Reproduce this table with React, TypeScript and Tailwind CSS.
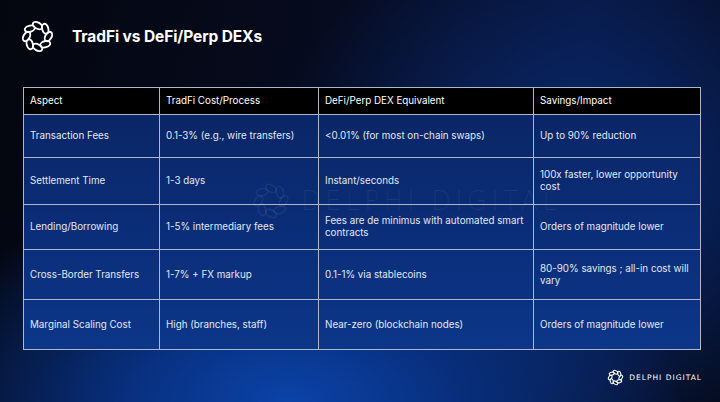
const rows = [
  {
    aspect: "Transaction Fees",
    tradfi: "0.1-3% (e.g., wire transfers)",
    defi: "<0.01% (for most on-chain swaps)",
    impact: "Up to 90% reduction",
    h: "h-[43px]",
  },
  {
    aspect: "Settlement Time",
    tradfi: "1-3 days",
    defi: "Instant/seconds",
    impact: "100x faster, lower opportunity cost",
    h: "h-[47px]",
  },
  {
    aspect: "Lending/Borrowing",
    tradfi: "1-5% intermediary fees",
    defi: "Fees are de minimus with automated smart contracts",
    impact: "Orders of magnitude lower",
    h: "h-[45px]",
  },
  {
    aspect: "Cross-Border Transfers",
    tradfi: "1-7% + FX markup",
    defi: "0.1-1% via stablecoins",
    impact: "80-90% savings ; all-in cost will vary",
    h: "h-[50px]",
  },
  {
    aspect: "Marginal Scaling Cost",
    tradfi: "High (branches, staff)",
    defi: "Near-zero (blockchain nodes)",
    impact: "Orders of magnitude lower",
    h: "h-[50px]",
  },
];

// braided ring mark used in the header, watermark and footer
function DelphiMark({ className, stroke = 1.6 }: { className?: string; stroke?: number }) {
  const loops = Array.from({ length: 8 }, (_, i) => i * 45);
  return (
    <svg viewBox="-24 -24 48 48" className={className} fill="none">
      {loops.map((deg) => (
        <ellipse
          key={deg}
          cx="0"
          cy="-15"
          rx="7"
          ry="4.2"
          transform={`rotate(${deg}) rotate(30 0 -15)`}
          stroke="currentColor"
          strokeWidth={stroke}
        />
      ))}
    </svg>
  );
}

export default function App() {
  const cell = "border border-[#aeb6c8] px-[6px] align-middle";

  return (
    <div
      className="relative w-[720px] h-[402px] overflow-hidden bg-[radial-gradient(ellipse_55%_55%_at_40%_100%,#0b43a8_0%,#08307f_40%,transparent_100%),radial-gradient(ellipse_45%_70%_at_82%_45%,#0a2a72_0%,transparent_100%),linear-gradient(100deg,#04060f_0%,#060b1f_45%,#071336_75%,#040814_100%)] font-['Inter','Liberation_Sans',sans-serif]"
    >
      {/* Title */}
      <div className="flex items-center gap-[17px] pl-[20px] pt-[19px]">
        <DelphiMark className="w-[35px] h-[35px] text-white" stroke={2.6} />
        <h1 className="text-[15.5px] font-bold text-white tracking-[-0.1px]">
          TradFi vs DeFi/Perp DEXs
        </h1>
      </div>

      {/* Table */}
      <div className="relative mt-[33px] ml-[23px] w-[677px]">
        <table className="w-full border-collapse table-fixed text-[9.8px] leading-[12px]">
          <colgroup>
            <col className="w-[136px]" />
            <col className="w-[159px]" />
            <col className="w-[215px]" />
            <col className="w-[167px]" />
          </colgroup>
          <thead>
            <tr className="h-[27px] bg-black text-white text-left">
              <th className={`${cell} font-normal`}>Aspect</th>
              <th className={`${cell} font-normal`}>TradFi Cost/Process</th>
              <th className={`${cell} font-normal`}>DeFi/Perp DEX Equivalent</th>
              <th className={`${cell} font-normal`}>Savings/Impact</th>
            </tr>
          </thead>
          <tbody className="bg-[linear-gradient(180deg,#0a2667_0%,#0b2f7c_60%,#0c3689_100%)] text-[#e3e7f0]">
            {rows.map((r) => (
              <tr key={r.aspect} className={r.h}>
                <td className={cell}>{r.aspect}</td>
                <td className={cell}>{r.tradfi}</td>
                <td className={cell}>{r.defi}</td>
                <td className={cell}>{r.impact}</td>
              </tr>
            ))}
          </tbody>
        </table>

        {/* Watermark */}
        <div className="pointer-events-none absolute left-[228px] top-[94px] flex items-center gap-[10px] text-white/[0.06]">
          <DelphiMark className="w-[40px] h-[40px]" stroke={2} />
          <span className="text-[26px] font-light tracking-[4px] font-['DejaVu_Sans',sans-serif]">
            DELPHI DIGITAL
          </span>
        </div>
      </div>

      {/* Footer */}
      <div className="absolute right-[18px] bottom-[16px] flex items-center gap-[5px] text-white">
        <DelphiMark className="w-[17px] h-[17px]" stroke={3} />
        <span className="text-[7.5px] tracking-[1px] font-['DejaVu_Sans',sans-serif]">
          DELPHI DIGITAL
        </span>
      </div>
    </div>
  );
}
